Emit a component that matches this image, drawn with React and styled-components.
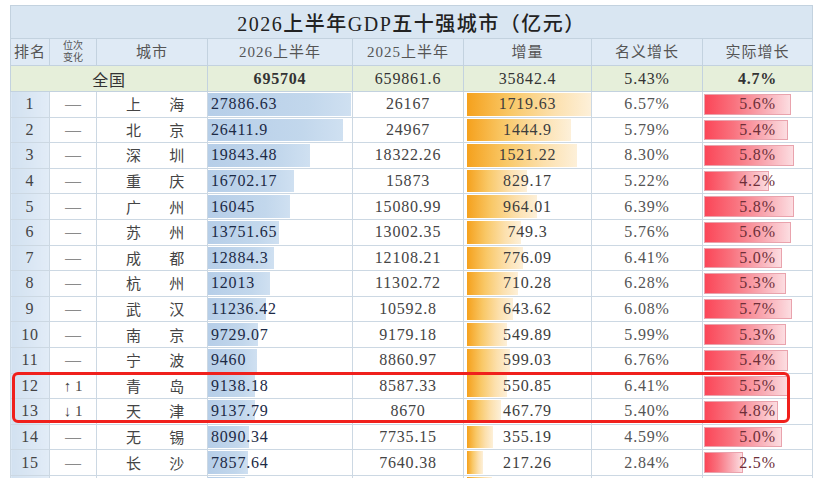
import React from 'react';
import styled, { createGlobalStyle } from 'styled-components';

const GlobalStyle = createGlobalStyle`
  html, body {
    margin: 0;
    padding: 0;
    background: #ffffff;
    overflow: hidden;
  }
  body {
    font-family: 'Liberation Serif', 'Noto Sans CJK SC', serif;
  }
`;

// column widths in px, left to right
const COLS = [39, 47, 111, 145, 111, 128, 111, 110];

const rows = [
  { rank: 1, change: '—', city: ['上', '海'], y26: '27886.63', y25: '26167', inc: '1719.63', nom: '6.57%', real: '5.6%' },
  { rank: 2, change: '—', city: ['北', '京'], y26: '26411.9', y25: '24967', inc: '1444.9', nom: '5.79%', real: '5.4%' },
  { rank: 3, change: '—', city: ['深', '圳'], y26: '19843.48', y25: '18322.26', inc: '1521.22', nom: '8.30%', real: '5.8%' },
  { rank: 4, change: '—', city: ['重', '庆'], y26: '16702.17', y25: '15873', inc: '829.17', nom: '5.22%', real: '4.2%' },
  { rank: 5, change: '—', city: ['广', '州'], y26: '16045', y25: '15080.99', inc: '964.01', nom: '6.39%', real: '5.8%' },
  { rank: 6, change: '—', city: ['苏', '州'], y26: '13751.65', y25: '13002.35', inc: '749.3', nom: '5.76%', real: '5.6%' },
  { rank: 7, change: '—', city: ['成', '都'], y26: '12884.3', y25: '12108.21', inc: '776.09', nom: '6.41%', real: '5.0%' },
  { rank: 8, change: '—', city: ['杭', '州'], y26: '12013', y25: '11302.72', inc: '710.28', nom: '6.28%', real: '5.3%' },
  { rank: 9, change: '—', city: ['武', '汉'], y26: '11236.42', y25: '10592.8', inc: '643.62', nom: '6.08%', real: '5.7%' },
  { rank: 10, change: '—', city: ['南', '京'], y26: '9729.07', y25: '9179.18', inc: '549.89', nom: '5.99%', real: '5.3%' },
  { rank: 11, change: '—', city: ['宁', '波'], y26: '9460', y25: '8860.97', inc: '599.03', nom: '6.76%', real: '5.4%' },
  { rank: 12, change: '↑ 1', city: ['青', '岛'], y26: '9138.18', y25: '8587.33', inc: '550.85', nom: '6.41%', real: '5.5%' },
  { rank: 13, change: '↓ 1', city: ['天', '津'], y26: '9137.79', y25: '8670', inc: '467.79', nom: '5.40%', real: '4.8%' },
  { rank: 14, change: '—', city: ['无', '锡'], y26: '8090.34', y25: '7735.15', inc: '355.19', nom: '4.59%', real: '5.0%' },
  { rank: 15, change: '—', city: ['长', '沙'], y26: '7857.64', y25: '7640.38', inc: '217.26', nom: '2.84%', real: '2.5%' },
];

// the next row only peeks in at the bottom edge: bars are visible, text is not
const peekRow = { y26: 7304.22, inc: 353.16, real: 4.8 };

const Page = styled.div`
  padding: 5px 0 0 10px;
`;

const Frame = styled.div`
  position: relative;
  width: 802px;
`;

const Table = styled.table`
  border-collapse: collapse;
  table-layout: fixed;
  width: 802px;
  color: #3a3a3a;
  border: 1px solid #c3d2df;
`;

const TitleCell = styled.th`
  height: 32px;
  padding: 0;
  background: #d9e6f2;
  border: 1px solid #c3d2df;
  font-size: 20px;
  font-weight: 500;
  letter-spacing: 1.5px;
  color: #222;
  text-align: center;
  vertical-align: middle;
`;

const HeadCell = styled.th`
  height: 26px;
  padding: 0;
  background: #dfeaf5;
  border: 1px solid #c3d2df;
  font-size: ${(p) => (p.$small ? '10px' : '15px')};
  line-height: ${(p) => (p.$small ? '12px' : '18px')};
  font-weight: 400;
  color: #555;
  letter-spacing: ${(p) => (p.$small ? '0' : '1px')};
  text-align: center;
  vertical-align: middle;
`;

const NationRow = styled.tr`
  background: #e6efda;
`;

const NationCell = styled.td`
  height: 25px;
  padding: 0;
  border: 1px solid #c3d2df;
  font-size: 16px;
  font-weight: ${(p) => (p.$bold ? 700 : 400)};
  letter-spacing: 0.8px;
  color: #333;
  text-align: center;
  vertical-align: middle;
`;

const BodyRow = styled.tr`
  height: 25.6px;
`;

const Cell = styled.td`
  position: relative;
  padding: 0;
  border: 1px solid #ccd8e3;
  font-size: 16px;
  line-height: 18px;
  letter-spacing: 0.8px;
  color: ${(p) => p.$color || '#444'};
  text-align: ${(p) => p.$align || 'center'};
  vertical-align: middle;
  background: ${(p) => p.$bg || '#fff'};
  white-space: nowrap;
  overflow: hidden;
`;

const CityText = styled.div`
  display: flex;
  justify-content: space-between;
  padding: 0 22px 0 29px;
  font-family: 'Noto Sans CJK SC', sans-serif;
  font-size: 15px;
  color: #444;
`;

const Change = styled.span`
  display: inline-block;
  font-family: ${(p) => (p.$dash ? "'Liberation Sans', sans-serif" : "'Liberation Serif', 'Noto Sans CJK SC', serif")};
  color: ${(p) => (p.$dash ? '#8a8a8a' : '#444')};
  font-size: ${(p) => (p.$dash ? '14px' : '15px')};
  line-height: 16px;
  letter-spacing: 0;
  transform: ${(p) => (p.$dash ? 'scaleX(1.15)' : 'none')};
`;

const Bar = styled.div`
  position: absolute;
  left: ${(p) => p.$left}px;
  top: ${(p) => p.$inset}px;
  bottom: ${(p) => p.$inset}px;
  background: ${(p) => p.$fill};
  border: ${(p) => p.$border || 'none'};
  box-sizing: border-box;
`;

const Value = styled.span`
  position: relative;
  padding-left: ${(p) => p.$pad || 0}px;
`;

const Highlight = styled.div`
  position: absolute;
  left: 2px;
  top: 367px;
  width: 778px;
  height: 51px;
  border: 3.5px solid #f0201c;
  border-radius: 6px;
  box-sizing: border-box;
  pointer-events: none;
`;

const BLUE = 'linear-gradient(to right, #b6cee8, #c2d7ec 70%, #cfe0f1)';
const ORANGE = 'linear-gradient(to right, #f5a11d, #f9c867 35%, #fce0ad 70%, #fdf0d9)';
const RED = 'linear-gradient(to right, #fb4658, #f9737f 35%, #f9abb4 70%, #fcdde1)';
const RANK_BG = 'linear-gradient(to right, #d2e1f0, #e2ecf7)';

const blueWidth = (v) => (143 * v) / 27886.63;
const orangeWidth = (v) => (124 * v) / 1719.63;
const redWidth = (v) => 15.5 * v;

const App = () => {
  return (
    <Page>
      <GlobalStyle />
      <Frame>
        <Table>
          <colgroup>
            {COLS.map((w, i) => (
              <col key={i} style={{ width: w }} />
            ))}
          </colgroup>
          <thead>
            <tr>
              <TitleCell colSpan={8}>2026上半年GDP五十强城市（亿元）</TitleCell>
            </tr>
            <tr>
              <HeadCell>排名</HeadCell>
              <HeadCell $small>
                位次
                <br />
                变化
              </HeadCell>
              <HeadCell>城市</HeadCell>
              <HeadCell>2026上半年</HeadCell>
              <HeadCell>2025上半年</HeadCell>
              <HeadCell>增量</HeadCell>
              <HeadCell>名义增长</HeadCell>
              <HeadCell>实际增长</HeadCell>
            </tr>
          </thead>
          <tbody>
            <NationRow>
              <NationCell colSpan={3}>全国</NationCell>
              <NationCell $bold>695704</NationCell>
              <NationCell>659861.6</NationCell>
              <NationCell>35842.4</NationCell>
              <NationCell>5.43%</NationCell>
              <NationCell $bold>4.7%</NationCell>
            </NationRow>
            {rows.map((r) => (
              <BodyRow key={r.rank}>
                <Cell $bg={RANK_BG} $color="#444">
                  {r.rank}
                </Cell>
                <Cell>
                  <Change $dash={r.change === '—'}>{r.change}</Change>
                </Cell>
                <Cell>
                  <CityText>
                    <span>{r.city[0]}</span>
                    <span>{r.city[1]}</span>
                  </CityText>
                </Cell>
                <Cell $align="left" $color="#1c2a46">
                  <Bar $left={0} $inset={1} $fill={BLUE} style={{ width: blueWidth(parseFloat(r.y26)) }} />
                  <Value $pad={3}>{r.y26}</Value>
                </Cell>
                <Cell>{r.y25}</Cell>
                <Cell $color="#3d3d3d">
                  <Bar $left={3} $inset={1} $fill={ORANGE} style={{ width: orangeWidth(parseFloat(r.inc)) }} />
                  <Value>{r.inc}</Value>
                </Cell>
                <Cell $color="#555">{r.nom}</Cell>
                <Cell $color="#6e2f38">
                  <Bar
                    $left={1}
                    $inset={2}
                    $fill={RED}
                    $border="1px solid #e9a3ad"
                    style={{ width: redWidth(parseFloat(r.real)) }}
                  />
                  <Value>{r.real}</Value>
                </Cell>
              </BodyRow>
            ))}
            <BodyRow>
              <Cell $bg={RANK_BG} />
              <Cell />
              <Cell />
              <Cell>
                <Bar $left={0} $inset={1} $fill={BLUE} style={{ width: blueWidth(peekRow.y26) }} />
              </Cell>
              <Cell />
              <Cell>
                <Bar $left={3} $inset={1} $fill={ORANGE} style={{ width: orangeWidth(peekRow.inc) }} />
              </Cell>
              <Cell />
              <Cell>
                <Bar
                  $left={1}
                  $inset={2}
                  $fill={RED}
                  $border="1px solid #e9a3ad"
                  style={{ width: redWidth(peekRow.real) }}
                />
              </Cell>
            </BodyRow>
          </tbody>
        </Table>
        <Highlight />
      </Frame>
    </Page>
  );
};

export default App;
